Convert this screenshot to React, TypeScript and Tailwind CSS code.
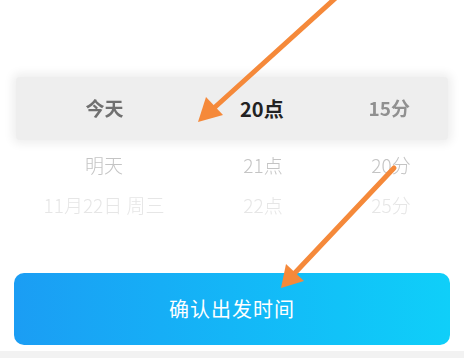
import React from 'react'

const rows = [
  { day: '明天', hour: '21点', min: '20分', tone: 'text-[#c4c4c4]', blur: 'blur-[0.5px]', h: 'h-[50px]' },
  { day: '11月22日 周三', hour: '22点', min: '25分', tone: 'text-[#e6e6e6]', blur: 'blur-[0.6px]', h: 'h-[30px]' },
]

const font = { fontFamily: '"Noto Sans CJK SC", "Noto Sans", sans-serif' }

export default function App() {
  return (
    <div className="relative w-[464px] h-[358px] bg-white overflow-hidden" style={font}>
      <div className="flex flex-col h-full">
        <div className="h-[77px]" />

        {/* Selected row */}
        <div className="mx-[16px] h-[63px] bg-[#eeeeee] rounded-sm flex items-center shadow-[0_0_10px_4px_#efefef]">
          <div className="w-[178px] text-center text-[19px] font-bold text-[#707070] blur-[0.7px]">今天</div>
          <div className="w-[138px] text-center text-[20px] font-bold text-[#222222]">20点</div>
          <div className="w-[118px] text-center text-[19px] font-semibold text-[#909090] blur-[0.7px]">15分</div>
        </div>

        {/* Other rows */}
        {rows.map((r) => (
          <div key={r.day} className={`mx-[14px] flex items-center ${r.h} ${r.tone}`}>
            <div className={`w-[180px] text-center text-[19px] font-light ${r.blur}`}>{r.day}</div>
            <div className={`w-[138px] text-center text-[19px] font-light ${r.blur}`}>{r.hour}</div>
            <div className={`w-[118px] text-center text-[19px] font-light ${r.blur}`}>{r.min}</div>
          </div>
        ))}

        <div className="flex-1" />

        {/* Confirm button */}
        <div className="mx-[14px] h-[72px] rounded-[10px] bg-gradient-to-r from-[#1b9df4] to-[#0fcff9] flex items-center justify-center">
          <span className="text-white text-[20px] tracking-[1px]">确认出发时间</span>
        </div>
        <div className="h-[6px]" />
        <div className="h-[7px] bg-[#f2f2f2]" />
      </div>

      {/* Annotation arrows */}
      <svg className="absolute inset-0 pointer-events-none" width="464" height="358" viewBox="0 0 464 358">
        <line x1="340" y1="-6" x2="214" y2="108" stroke="#f5893a" strokeWidth="5" strokeLinecap="round" />
        <path d="M198 122 L206 97 L223 115 Z" fill="#f5893a" />
        <line x1="394" y1="168" x2="292" y2="276" stroke="#f5893a" strokeWidth="5" strokeLinecap="round" />
        <path d="M281 288 L286 264 L304 281 Z" fill="#f5893a" />
      </svg>
    </div>
  )
}
